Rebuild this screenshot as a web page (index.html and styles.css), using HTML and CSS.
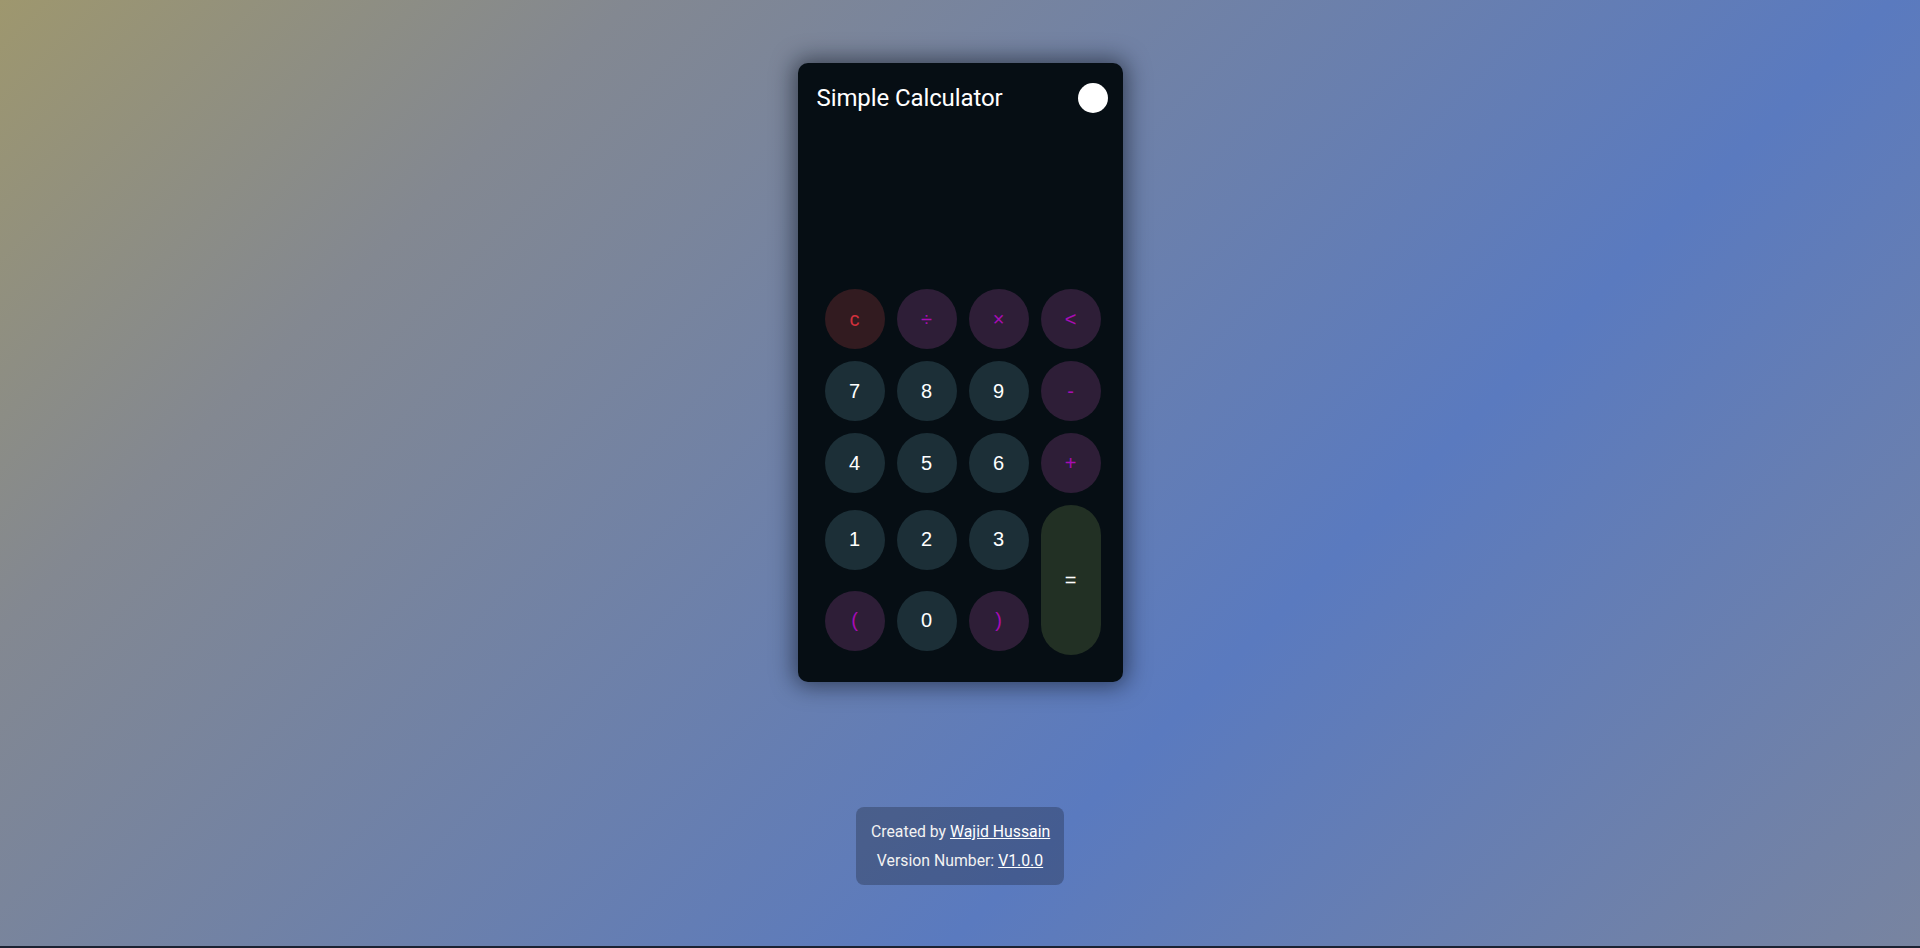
FILE: index.html
```html
<!DOCTYPE html>
<html lang="en">
<head>
<meta charset="utf-8">
<title>Simple Calculator</title>
<link rel="stylesheet" href="styles.css">
</head>
<body>
<main class="calc">
  <header class="calc-head">
    <h1 class="calc-title">Simple Calculator</h1>
    <button class="theme-toggle" aria-label="Toggle theme"></button>
  </header>
  <div class="display"></div>
  <div class="keypad">
    <button class="key key-clear">c</button>
    <button class="key key-op">÷</button>
    <button class="key key-op">×</button>
    <button class="key key-op">&lt;</button>
    <button class="key key-num">7</button>
    <button class="key key-num">8</button>
    <button class="key key-num">9</button>
    <button class="key key-op">-</button>
    <button class="key key-num">4</button>
    <button class="key key-num">5</button>
    <button class="key key-num">6</button>
    <button class="key key-op">+</button>
    <button class="key key-num">1</button>
    <button class="key key-num">2</button>
    <button class="key key-num">3</button>
    <button class="key key-eq">=</button>
    <button class="key key-op">(</button>
    <button class="key key-num">0</button>
    <button class="key key-op">)</button>
  </div>
</main>
<footer class="credits">
  <p class="credit-line">Created by <a href="#">Wajid Hussain</a></p>
  <p class="credit-line">Version Number: <a href="#">V1.0.0</a></p>
</footer>
</body>
</html>
```
FILE: styles.css
```css
html {
  background: #1b2232;
  margin: 0;
  padding: 0;
}
body {
  margin: 0;
  height: calc(100vh - 2px);
  background: linear-gradient(135deg, #9e976e 0%, #838891 22%, #5a7abf 66%, #7884a0 100%);
  display: flex;
  flex-direction: column;
  align-items: center;
  font-family: Roboto, "Liberation Sans", sans-serif;
  overflow: hidden;
}
.calc {
  margin-top: 63px;
  width: 325px;
  box-sizing: border-box;
  padding: 20px 15px 27px 19px;
  background: #060e14;
  border-radius: 10px;
  box-shadow: 0 0 22px 4px rgba(10, 14, 25, 0.55);
}
.calc-head {
  display: flex;
  align-items: center;
  justify-content: space-between;
  height: 30px;
}
.calc-title {
  margin: 0;
  font-family: Roboto, sans-serif;
  font-weight: 400;
  font-size: 24px;
  color: #ffffff;
  letter-spacing: -0.1px;
}
.theme-toggle {
  width: 30px;
  height: 30px;
  border-radius: 50%;
  border: none;
  padding: 0;
  background: #ffffff;
}
.display {
  height: 176px;
}
.keypad {
  margin-left: 8px;
  display: grid;
  grid-template-columns: repeat(4, 60px);
  grid-template-rows: 60px 60px 60px 69px 69px;
  gap: 12px;
  align-items: center;
}
.key {
  width: 60px;
  height: 60px;
  border-radius: 50%;
  border: none;
  padding: 0;
  font-family: "Liberation Sans", Arial, sans-serif;
  font-size: 20px;
  color: #ffffff;
}
.key-num {
  background: #1c2f37;
}
.key-op {
  background: #2e1e37;
  color: #a80cb4;
}
.key-clear {
  background: #321b20;
  color: #d0303c;
}
.key-eq {
  grid-column: 4;
  grid-row: 4 / span 2;
  height: 150px;
  border-radius: 30px;
  background: #223024;
  color: #ffffff;
}
.credits {
  margin-top: 125px;
  width: 208px;
  box-sizing: border-box;
  padding: 10px 15px;
  background: rgba(0, 0, 0, 0.24);
  border-radius: 8px;
  text-align: center;
  color: #f2f2f2;
  font-size: 15.8px;
}
.credit-line {
  margin: 0;
  line-height: 29px;
  white-space: nowrap;
}
.credit-line a {
  color: #ffffff;
  text-decoration: underline;
}
```
